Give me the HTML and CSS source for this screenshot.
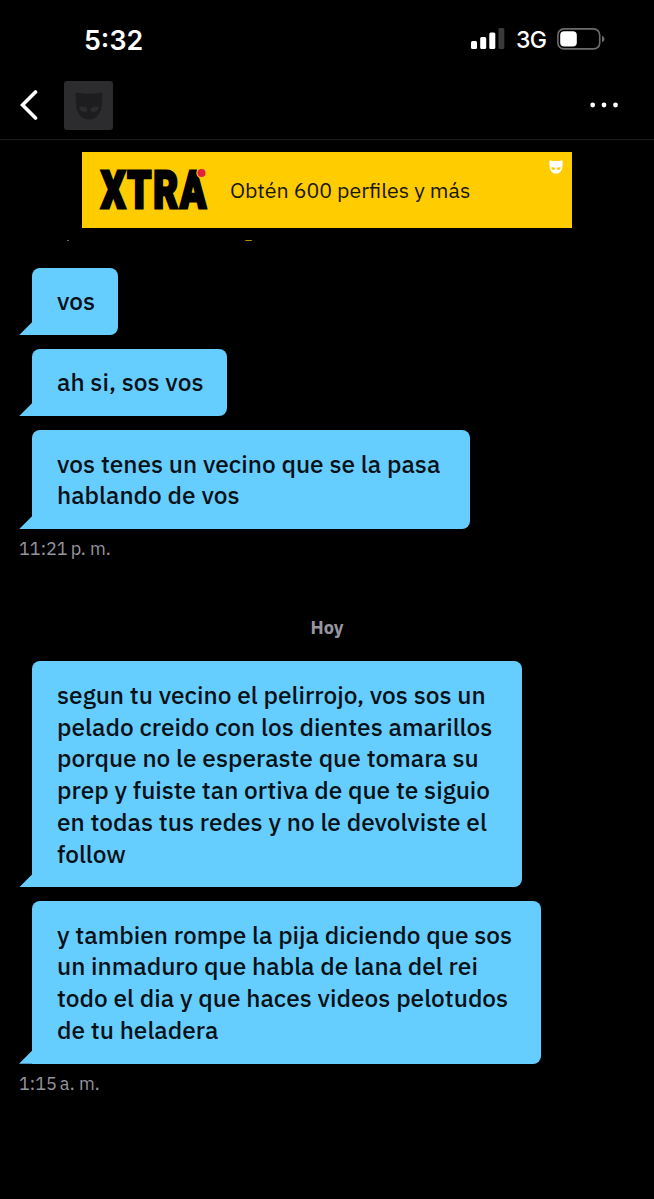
FILE: index.html
```html
<!DOCTYPE html>
<html lang="es">
<head>
<meta charset="utf-8">
<title>Chat</title>
<link rel="stylesheet" href="styles.css">
</head>
<body>
<svg class="defs" width="0" height="0">
  <symbol id="mask" viewBox="0 0 28 28">
    <path fill-rule="evenodd" d="M2.500 .8 Q8 1.800 14 1.800 Q20 1.800 25.500 .8 Q27.500 .5 27.500 2.500 Q27.500 11 26 18 Q22.500 27.500 14 27.500 Q5.500 27.500 2 18 Q.5 11 .5 2.500 Q.5 .5 2.500 .8Z M4 15 Q5 19.500 9 20 Q12.500 20 12.500 17.500 Q11 13.500 4 15Z M24 15 Q23 19.500 19 20 Q15.500 20 15.500 17.500 Q17 13.500 24 15Z"/>
  </symbol>
</svg>
<div class="status">
  <span class="time">5:32</span>
  <div class="signals">
    <svg class="bars" width="34" height="22" viewBox="0 0 34 22">
      <g fill="#fff"><rect x="0" y="13" width="6" height="8" rx="1.500"/><rect x="9.200" y="9" width="6" height="12" rx="1.500"/><rect x="18.300" y="4.500" width="6" height="16.500" rx="1.500"/></g>
      <rect x="27.500" y="0" width="5.800" height="21" rx="1.500" fill="#3a3a3a"/>
    </svg>
    <span class="network">3G</span>
    <svg class="battery" width="48" height="22" viewBox="0 0 48 22">
      <rect x=".9" y=".9" width="41.800" height="20" rx="6" fill="none" stroke="#6c6c6c" stroke-width="1.600"/>
      <rect x="3.200" y="3.200" width="16.600" height="15.400" rx="4" fill="#fff"/>
      <path d="M45 7.800 Q47.500 8.500 47.500 11 Q47.500 13.500 45 14Z" fill="#6c6c6c"/>
    </svg>
  </div>
</div>
<header class="header">
  <svg class="back" width="18" height="30" viewBox="0 0 18 30"><path d="M15.500 2 L2.500 15 L15.500 28" fill="none" stroke="#fff" stroke-width="3.600" stroke-linecap="round" stroke-linejoin="miter"/></svg>
  <div class="avatar"><svg width="28" height="28" fill="#1d1d1f"><use href="#mask"/></svg></div>
  <svg class="more" width="28" height="6" viewBox="0 0 28 6" fill="#fff"><circle cx="2.700" cy="3" r="2.400"/><circle cx="14" cy="3" r="2.400"/><circle cx="25.500" cy="3" r="2.400"/></svg>
</header>
<div class="banner">
  <svg class="xtra" width="112" height="70" viewBox="-2 0 112 70">
    <text x="1" y="53" textLength="107" lengthAdjust="spacingAndGlyphs">XTRA</text>
    <circle cx="101.500" cy="18" r="5.200" fill="#ffcc00"/><circle cx="101.500" cy="18" r="4" fill="#e0203c"/>
  </svg>
  <span class="offer">Obtén 600 perfiles y más</span>
  <svg class="brand" width="14" height="14" fill="#fff"><use href="#mask"/></svg>
</div>
<main class="chat">
  <div class="clipped"><i class="tip pale"></i><i class="tip gold"></i></div>
  <div class="bubble w1"><p>vos</p></div>
  <div class="bubble w2"><p>ah si, sos vos</p></div>
  <div class="bubble w3"><p>vos tenes un vecino que se la pasa</p><p>hablando de vos</p></div>
  <div class="stamp">11:21<span class="thin"></span>p. m.</div>
  <div class="day">Hoy</div>
  <div class="bubble w4"><p>segun tu vecino el pelirrojo, vos sos un</p><p>pelado creido con los dientes amarillos</p><p>porque no le esperaste que tomara su</p><p>prep y fuiste tan ortiva de que te siguio</p><p>en todas tus redes y no le devolviste el</p><p>follow</p></div>
  <div class="bubble w5"><p>y tambien rompe la pija diciendo que sos</p><p>un inmaduro que habla de lana del rei</p><p>todo el dia y que haces videos pelotudos</p><p>de tu heladera</p></div>
  <div class="stamp">1:15<span class="thin"></span>a. m.</div>
</main>
</body>
</html>
```
FILE: styles.css
```css
* { box-sizing: border-box; }
body { margin: 0; background: #000; width: 654px; height: 1199px; overflow: hidden; font-family: "IBM Plex Sans", "Noto Sans", sans-serif; }
p { margin: 0; }
svg { display: block; flex: none; }
.defs { position: absolute; }
.status { height: 78px; padding: 0 49px 0 84px; display: flex; justify-content: space-between; align-items: center; color: #fff; font-family: Inter, sans-serif; }
.time { font-size: 26.800px; font-weight: 560; line-height: 30px; padding-top: 1px; }
.signals { display: flex; align-items: center; }
.network { font-size: 23px; font-weight: 500; line-height: 28px; width: 30px; margin: 2px 11px 0; letter-spacing: -.7px; }
.header { height: 62px; border-bottom: 1px solid #1c1c1e; padding: 3px 35px 9px 20px; display: flex; align-items: center; }
.back { margin-bottom: 1px; }
.avatar { width: 49px; height: 49px; margin-left: 26px; border-radius: 3px; background: #2c2c2e; display: flex; align-items: center; justify-content: center; }
.more { margin: 0 1px 2px auto; }
.banner { width: 490px; height: 76px; margin: 12px 0 0 82px; padding-left: 16px; background: #ffcc00; display: flex; align-items: center; color: #18150a; }
.xtra { overflow: visible; }
.xtra text { font-family: Roboto, sans-serif; font-size: 51px; font-weight: 900; letter-spacing: 2.500px; fill: #000; stroke: #000; stroke-width: 2.800px; }
.offer { flex: none; margin-left: 20px; font-size: 21.350px; width: 266px; white-space: nowrap; }
.brand { align-self: flex-start; margin: 8px 0 0 53px; }
.chat { margin-top: 12px; padding-left: 19px; display: flex; flex-direction: column; align-items: flex-start; }
.clipped { height: 27.600px; display: flex; }
.tip { width: 2px; height: 1px; margin-left: 48px; background: #77664a; }
.gold { width: 7px; margin-left: 176px; background: #b08c10; border-radius: 0 0 3px 3px; }
.bubble { position: relative; margin: 0 0 13.500px 13px; padding: 18.700px 0 17.200px 25px; border-radius: 8px 8px 8px 0; background: #66ceff; color: #061117; font-size: 24.440px; font-weight: 500; line-height: 31.750px; white-space: nowrap; }
.bubble::before { content: ""; position: absolute; left: -13px; bottom: 0; width: 13.500px; height: 13.500px; background: #66ceff; clip-path: polygon(100% 0, 100% 100%, 0 100%); }
.w1 { width: 86px; }
.w2 { width: 194.500px; }
.w3 { width: 437.500px; }
.w4 { width: 490px; }
.w5 { width: 508.500px; }
.stamp { margin-top: -6.800px; font-size: 18.100px; line-height: 24px; color: #96959f; white-space: nowrap; }
.thin { display: inline-block; width: 3px; }
.day { width: 616px; margin: 55px 0 21.200px; text-align: center; font-size: 18.200px; line-height: 25px; font-weight: 700; color: #96959f; }
```
